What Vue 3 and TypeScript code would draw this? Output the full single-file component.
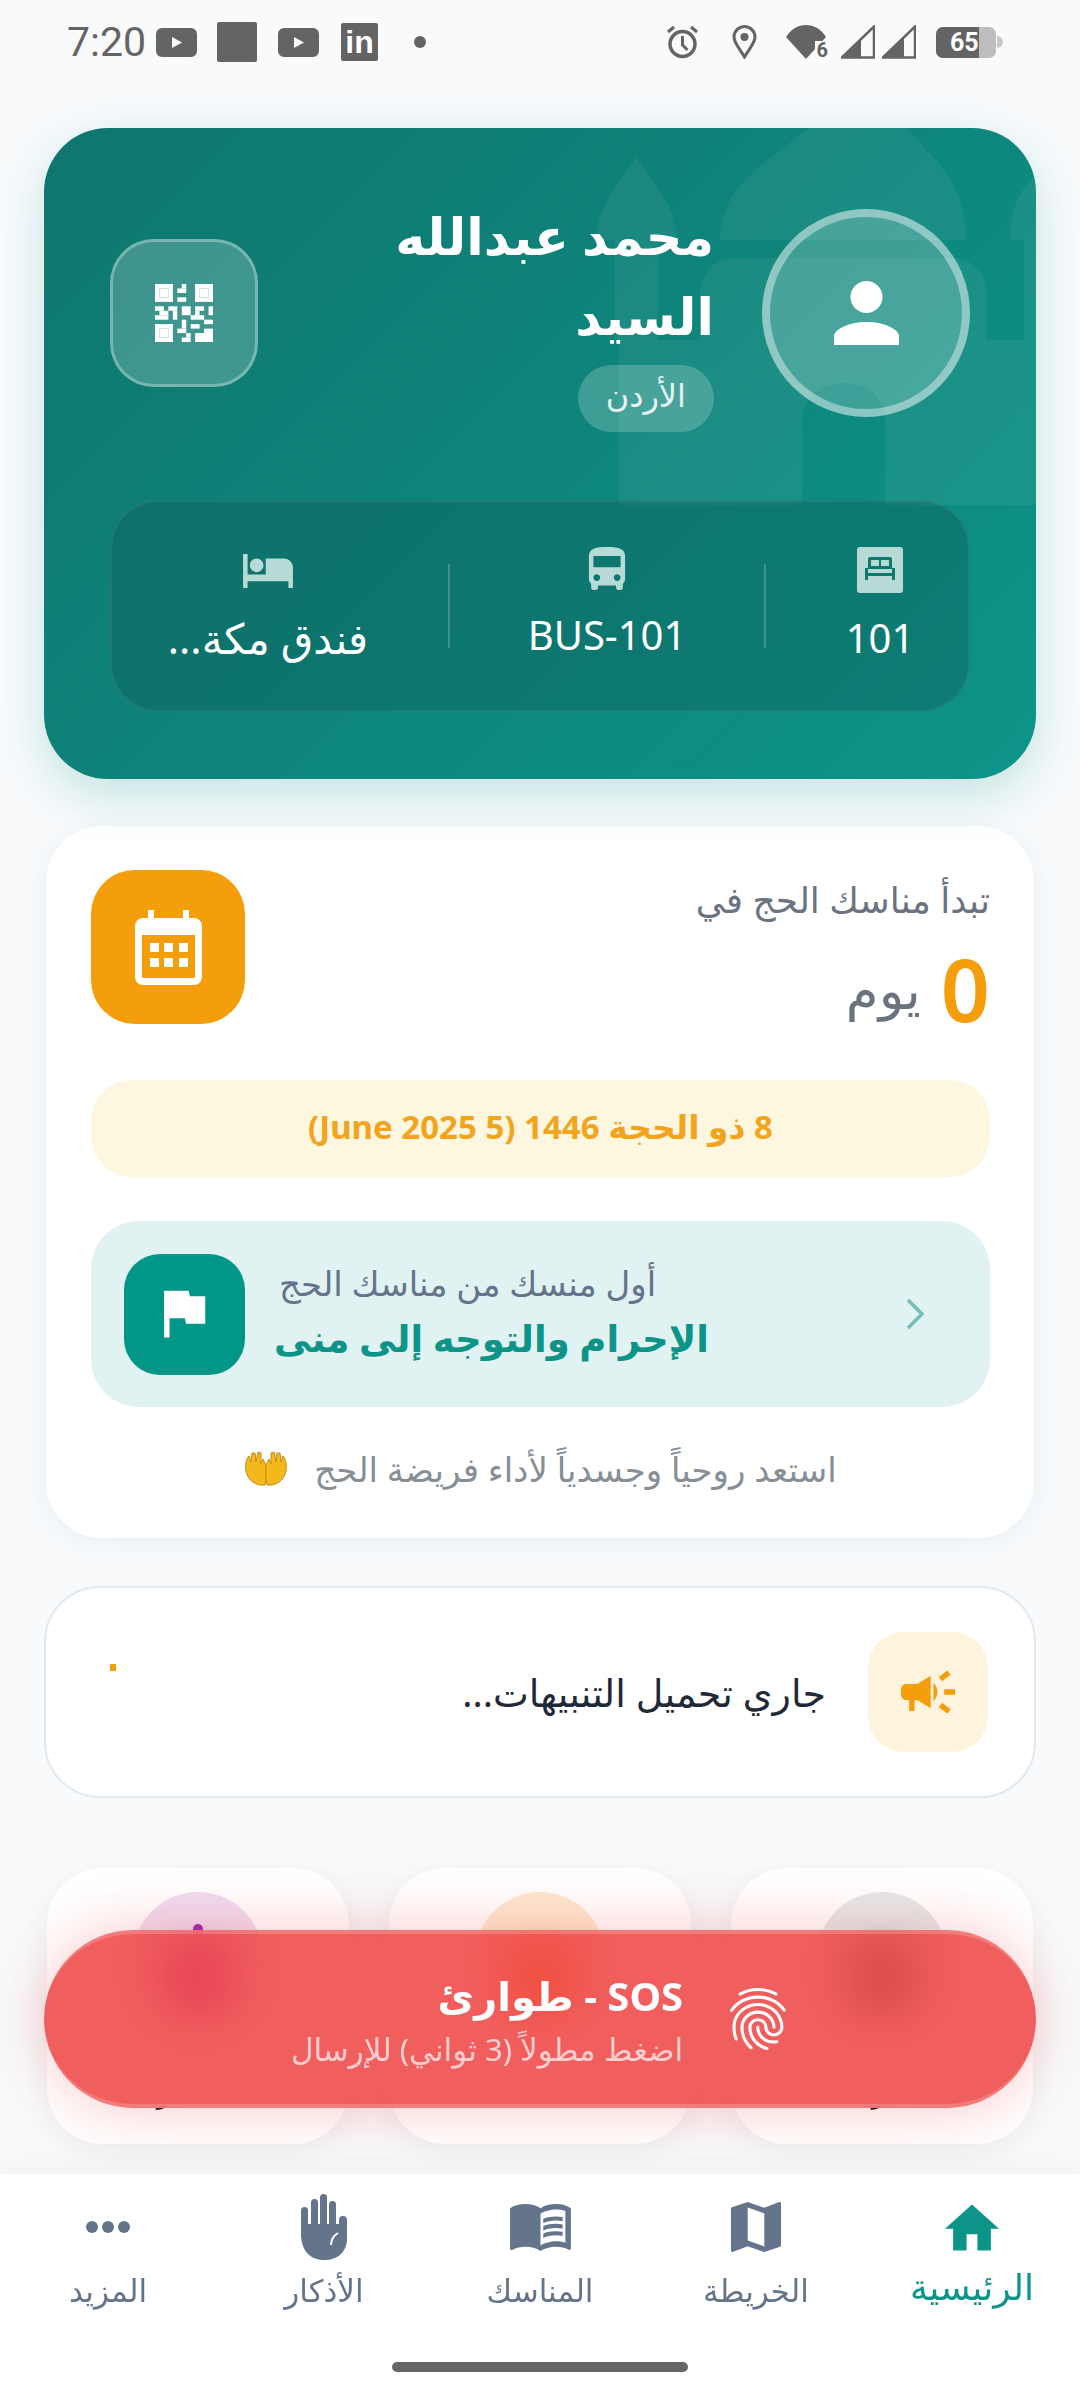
<script setup lang="ts">
interface Stat { label: string; cls: string; path: string; vb: string }
const stats: Stat[] = [
  { label: '101', cls: 'room', vb: '0 0 46 46', path: 'M3 0h40a3 3 0 0 1 3 3v40a3 3 0 0 1-3 3H3a3 3 0 0 1-3-3V3a3 3 0 0 1 3-3zM11 12v9H8v12h3v-4h24v4h3V21h-3v-9a2 2 0 0 0-2-2H13a2 2 0 0 0-2 2zm3 1h8v6h-8zm10 0h8v6h-8zM11 22h24v4H11z' },
  { label: 'BUS-101', cls: 'bus', vb: '4 2 16 19', path: 'M4 16c0 .88.39 1.67 1 2.22V20c0 .55.45 1 1 1h1c.55 0 1-.45 1-1v-1h8v1c0 .55.45 1 1 1h1c.55 0 1-.45 1-1v-1.78c.61-.55 1-1.34 1-2.22V6c0-3.5-3.58-4-8-4s-8 .5-8 4v10zm3.5 1c-.83 0-1.5-.67-1.5-1.5S6.67 14 7.5 14s1.5.67 1.5 1.5S8.33 17 7.5 17zm9 0c-.83 0-1.5-.67-1.5-1.5s.67-1.5 1.5-1.5 1.5.67 1.5 1.5-.67 1.5-1.5 1.5zm1.5-6H6V6h12v5z' },
  { label: 'فندق مكة...', cls: 'hotel', vb: '1 5 22 15', path: 'M7 13c1.66 0 3-1.34 3-3S8.66 7 7 7s-3 1.34-3 3 1.34 3 3 3zm12-6h-8v7H3V5H1v15h2v-3h18v3h2v-9c0-2.21-1.79-4-4-4z' }
]
interface Tile { label: string; circle: string; icon: string; tip: boolean }
const tiles: Tile[] = [
  { label: 'البريد', circle: '#e3e9e8', icon: '#455a64', tip: false },
  { label: 'الخدمة', circle: '#fde8d0', icon: '#f57c00', tip: false },
  { label: 'الأذكار', circle: '#f0dcf0', icon: '#9c27b0', tip: true }
]
const qr: number[][] = [
  [0,0,4,1],[0,0,1,4],[3,0,1,4],[0,3,4,1],[1,1,2,2],
  [9,0,4,1],[9,0,1,4],[12,0,1,4],[9,3,4,1],[10,1,2,2],
  [0,9,4,1],[0,9,1,4],[3,9,1,4],[0,12,4,1],[1,10,2,2],
  [6,0,1,1],[5,1,2,1],[5,3,2,1],[6,5,2,2],[0,5,2,1],[3,5,2,1],[1,6,2,1],[4,6,1,2],[0,7,3,1],
  [9,5,2,1],[12,5,1,2],[8,7,3,1],[11,8,2,1],[6,8,1,2],[5,10,2,1],[8,9,2,1],[6,12,2,1],[7,11,1,1],[9,11,2,2],[11,10,2,3],[9,6,1,1]
]
</script>

<template>
  <div class="page" dir="rtl">
    <div class="status" dir="ltr">
      <span class="time">7:20</span>
      <span class="yt yt-first"><svg viewBox="0 0 41 29" class="fill-grey"><path d="M6 0h29a6 6 0 0 1 6 6v17a6 6 0 0 1-6 6H6a6 6 0 0 1-6-6V6a6 6 0 0 1 6-6zm10 9v11l10-5.500z" fill-rule="evenodd" /></svg></span>
      <span class="sq"></span>
      <span class="yt"><svg viewBox="0 0 41 29" class="fill-grey"><path d="M6 0h29a6 6 0 0 1 6 6v17a6 6 0 0 1-6 6H6a6 6 0 0 1-6-6V6a6 6 0 0 1 6-6zm10 9v11l10-5.500z" fill-rule="evenodd" /></svg></span>
      <span class="li">in</span>
      <span class="dot"></span>
      <span class="grow"></span>
      <svg class="st alarm" viewBox="0 0 33 34" fill="none" stroke="#646464"><circle cx="16.500" cy="19" r="12.500" stroke-width="3.500" /><path d="M16.500 11v9l5 5M2 7l6-5M31 7l-6-5" stroke-width="3" /></svg>
      <svg class="st pin" viewBox="0 0 25 34" fill="none" stroke="#646464" stroke-width="3"><path d="M12.500 32C8 24 2 18 2 12a10.500 10.500 0 0 1 21 0c0 6-6 12-10.500 20z" /><circle cx="12.500" cy="12" r="4" fill="#646464" stroke="none" /></svg>
      <span class="wifi"><svg viewBox="0 0 40 34"><path d="M0 12C5 4 12 0 20 0s15 4 20 12L20 34z" fill="#646464" /></svg><b>6</b></span>
      <svg class="st sig" viewBox="0 0 34 33" fill="none"><path d="M1 32 33 1v31z" stroke="#646464" stroke-width="2.500" /><path d="M1 32 20 14v18z" fill="#646464" /></svg>
      <svg class="st sig sig2" viewBox="0 0 34 33" fill="none"><path d="M1 32 33 1v31z" stroke="#646464" stroke-width="2.500" /><path d="M1 32 22 12v20z" fill="#646464" /></svg>
      <span class="batt"><span class="batt-level"></span><span class="batt-text">65</span></span>
      <span class="batt-tip"></span>
    </div>

    <section class="hero">
      <svg class="mosque" viewBox="0 0 992 651" aria-hidden="true">
        <path d="M676 112C676 50 735 30 770-6h86c32 36 66 56 66 118z" />
        <path d="M552 112c0-32 22-55 40-83 18 28 41 51 41 83zM571 112h43v100h-43z" />
        <path d="M992 47c-18 14-26 38-26 65h26zM980 112h12v100h-12z" />
        <path d="M656 212v-44c0-24 14-38 38-38h210c26 0 39 14 39 38v44z" />
        <path fill-rule="evenodd" d="M575 212h417v165H841v-80c0-28-16-42-41-42s-42 14-42 42v80H575z" />
      </svg>
      <div class="hero-top">
        <div class="avatar">
          <svg viewBox="0 0 65 64" class="avatar-icon"><circle cx="32.500" cy="16" r="16" fill="#fff" /><path d="M0 64V55C0 49 14 41 32.500 41S65 49 65 55v9z" fill="#fff" /></svg>
        </div>
        <div class="who">
          <h1 class="name">محمد عبدالله السيد</h1>
          <span class="badge">الأردن</span>
        </div>
        <span class="grow"></span>
        <button class="qr" type="button">
          <svg viewBox="0 0 13 13" class="qr-icon"><rect v-for="(r, i) in qr" :key="i" :x="r[0]" :y="r[1]" :width="r[2]" :height="r[3]" fill="#fff" /></svg>
        </button>
      </div>
      <div class="stats">
        <template v-for="(s, i) in stats" :key="s.cls">
          <span v-if="i > 0" class="sep"></span>
          <div class="stat" :class="s.cls">
            <svg :viewBox="s.vb" class="stat-icon"><path :d="s.path" fill="#b8dad6" fill-rule="evenodd" /></svg>
            <span class="stat-label">{{ s.label }}</span>
          </div>
        </template>
      </div>
    </section>

    <section class="count-card">
      <div class="count-head">
        <div class="count-text">
          <div class="count-sub">تبدأ مناسك الحج في</div>
          <div class="count-row"><span class="zero">0</span><span class="day">يوم</span></div>
        </div>
        <span class="grow"></span>
        <div class="cal-box">
          <svg viewBox="0 0 67 75" class="cal-icon" fill="#fff"><path fill-rule="evenodd" d="M13 0h6v8h29V0h6v8h5a8 8 0 0 1 8 8v51a8 8 0 0 1-8 8H8a8 8 0 0 1-8-8V16a8 8 0 0 1 8-8h5zM7 25v42a1 1 0 0 0 1 1h51a1 1 0 0 0 1-1V25z" /><rect x="15" y="33" width="9" height="9" /><rect x="29" y="33" width="9" height="9" /><rect x="44" y="33" width="9" height="9" /><rect x="15" y="48" width="9" height="9" /><rect x="29" y="48" width="9" height="9" /><rect x="44" y="48" width="9" height="9" /></svg>
        </div>
      </div>
      <div class="date-pill">8 ذو الحجة 1446 (5 June 2025)</div>
      <div class="rite" dir="ltr">
        <div class="rite-icon">
          <svg viewBox="5 4 16 17" class="flag"><path d="M14.400 6 14 4H5v17h2v-7h5.600l.4 2h7V6z" fill="#fff" /></svg>
        </div>
        <div class="rite-text" dir="rtl">
          <div class="rite-sub">أول منسك من مناسك الحج</div>
          <div class="rite-title">الإحرام والتوجه إلى منى</div>
        </div>
        <span class="grow"></span>
        <svg viewBox="0 0 18 32" class="chev" fill="none" stroke="#6fc0b6" stroke-width="3.500"><path d="m2 2 14 14L2 30" /></svg>
      </div>
      <div class="note">
        <span>استعد روحياً وجسدياً لأداء فريضة الحج</span>
        <svg viewBox="0 0 44 36" class="palms"><path d="M21 34C12 35 4 30 2 20 1 14 2 8 5 5l2 6 1-9 3 0 1 9 2-10 3 1 0 11 2-5 3 6c1 7 0 14-1 20z" fill="#f3b81c" stroke="#c98a10" stroke-width="1" /><path d="M23 34c9 1 17-4 19-14 1-6 0-12-3-15l-2 6-1-9-3 0-1 9-2-10-3 1 0 11-2-5-3 6c-1 7 0 14 1 20z" fill="#f3b81c" stroke="#c98a10" stroke-width="1" /></svg>
      </div>
    </section>

    <section class="alert">
      <div class="alert-icon">
        <svg viewBox="2 4 20 16" class="horn"><path d="M18 11v2h4v-2h-4zm-2 6.610c.96.71 2.210 1.650 3.200 2.390.4-.53.8-1.070 1.200-1.600-.99-.74-2.240-1.680-3.200-2.400-.4.54-.8 1.080-1.200 1.610zM20.400 5.600c-.4-.53-.8-1.070-1.200-1.600-.99.74-2.240 1.680-3.200 2.400.4.53.8 1.070 1.200 1.600.96-.72 2.210-1.650 3.200-2.400zM4 9c-1.100 0-2 .9-2 2v2c0 1.100.9 2 2 2h1v4h2v-4h1l5 3V6L8 9H4zm11.500 3c0-1.330-.58-2.530-1.500-3.350v6.690c.92-.81 1.500-2.010 1.500-3.340z" fill="#f59e0b" /></svg>
      </div>
      <span class="alert-text">جاري تحميل التنبيهات...</span>
      <span class="ticker"></span>
    </section>

    <section class="tiles">
      <div v-for="t in tiles" :key="t.label" class="tile">
        <div class="tile-circle" :style="{ background: t.circle }">
          <span class="tile-glyph" :style="{ background: t.icon }"></span>
          <span v-if="t.tip" class="tile-tip" :style="{ background: t.icon }"></span>
        </div>
        <span class="tile-label">{{ t.label }}</span>
      </div>
    </section>

    <div class="sos" dir="ltr">
      <div class="sos-text" dir="rtl">
        <div class="sos-title">SOS - طوارئ</div>
        <div class="sos-sub">اضغط مطولاً (3 ثواني) للإرسال</div>
      </div>
      <svg viewBox="2 1.500 20 21" class="finger"><path fill="#fff" d="M17.810 4.470c-.08 0-.16-.02-.23-.06C15.660 3.420 14 3 12.010 3c-1.980 0-3.860.47-5.570 1.410-.24.13-.54.04-.68-.2-.13-.24-.04-.55.2-.68C7.820 2.520 9.860 2 12.010 2c2.130 0 3.990.47 6.030 1.520.25.13.34.43.21.67-.09.18-.26.28-.44.28zM3.500 9.720c-.1 0-.2-.03-.29-.09-.23-.16-.28-.47-.12-.7.99-1.400 2.250-2.500 3.750-3.270C9.980 4.040 14 4.030 17.150 5.650c1.500.77 2.760 1.860 3.750 3.250.16.22.11.54-.12.7-.23.16-.54.11-.7-.12-.9-1.260-2.040-2.250-3.390-2.940-2.870-1.470-6.540-1.470-9.400.01-1.360.7-2.500 1.700-3.400 2.960-.08.14-.23.21-.39.21zm6.250 12.070c-.13 0-.26-.05-.35-.15-.87-.87-1.340-1.430-2.010-2.640-.69-1.230-1.050-2.730-1.050-4.340 0-2.970 2.540-5.390 5.660-5.390s5.660 2.420 5.660 5.390c0 .28-.22.5-.5.5s-.5-.22-.5-.5c0-2.420-2.090-4.390-4.660-4.390-2.570 0-4.660 1.970-4.660 4.390 0 1.440.32 2.770.93 3.850.64 1.150 1.080 1.640 1.850 2.420.19.2.19.51 0 .71-.11.1-.24.15-.37.15zm7.170-1.850c-1.190 0-2.240-.3-3.100-.89-1.490-1.010-2.380-2.650-2.380-4.390 0-.28.22-.5.5-.5s.5.22.5.5c0 1.410.72 2.740 1.940 3.560.71.48 1.540.71 2.540.71.24 0 .64-.03 1.040-.1.27-.05.53.13.58.41.05.27-.13.53-.41.58-.57.11-1.070.12-1.210.12zM14.910 22c-.04 0-.09-.01-.13-.02-1.590-.44-2.630-1.030-3.720-2.100-1.400-1.390-2.170-3.240-2.170-5.220 0-1.620 1.380-2.940 3.080-2.940 1.700 0 3.080 1.320 3.080 2.940 0 1.070.93 1.940 2.080 1.940s2.080-.87 2.080-1.940c0-3.770-3.250-6.830-7.250-6.830-2.840 0-5.440 1.580-6.610 4.030-.39.81-.59 1.760-.59 2.800 0 .78.07 2.010.67 3.610.1.260-.03.55-.29.64-.26.1-.55-.04-.64-.29-.49-1.310-.73-2.610-.73-3.960 0-1.200.23-2.290.68-3.240 1.330-2.790 4.280-4.600 7.510-4.600 4.550 0 8.250 3.510 8.250 7.830 0 1.620-1.380 2.940-3.080 2.940s-3.080-1.320-3.080-2.940c0-1.070-.93-1.940-2.080-1.940s-2.080.87-2.080 1.940c0 1.710.66 3.310 1.870 4.510.95.94 1.860 1.460 3.270 1.850.27.07.42.35.35.61-.05.23-.26.38-.47.38z" /></svg>
    </div>

    <nav class="nav">
      <div class="nav-item active">
        <span class="nav-ico"><svg viewBox="2 3 20 17" class="i-home"><path d="M10 20v-6h4v6h5v-8h3L12 3 2 12h3v8z" fill="#0d9488" /></svg></span>
        <span class="nav-label">الرئيسية</span>
      </div>
      <div class="nav-item">
        <span class="nav-ico"><svg viewBox="3 3 18 18" class="i-map"><path d="M20.500 3l-.16.03L15 5.100 9 3 3.360 4.900c-.21.07-.36.25-.36.48V20.500c0 .28.22.5.5.5l.16-.03L9 18.900l6 2.100 5.640-1.900c.21-.07.36-.25.36-.48V3.500c0-.28-.22-.5-.5-.5zM15 19l-6-2.110V5l6 2.110V19z" fill="#64748b" /></svg></span>
        <span class="nav-label">الخريطة</span>
      </div>
      <div class="nav-item">
        <span class="nav-ico"><svg viewBox="1 4.500 22 17" class="i-book"><path fill="#64748b" d="M21 5c-1.110-.35-2.330-.5-3.500-.5-1.950 0-4.050.4-5.500 1.500-1.450-1.100-3.550-1.500-5.500-1.500S2.450 4.900 1 6v14.650c0 .25.25.5.5.5.1 0 .15-.05.25-.05C3.100 20.450 5.050 20 6.500 20c1.950 0 4.050.4 5.500 1.500 1.350-.85 3.800-1.500 5.500-1.500 1.650 0 3.350.3 4.750 1.050.1.05.15.05.25.05.25 0 .5-.25.5-.5V6c-.6-.45-1.250-.75-2-1zm0 13.500c-1.100-.35-2.300-.5-3.500-.5-1.700 0-4.150.65-5.500 1.500V8c1.350-.85 3.800-1.500 5.500-1.500 1.200 0 2.400.15 3.500.5v11.500z" /><path fill="#64748b" d="M17.500 10.500c.88 0 1.730.09 2.500.26V9.240c-.79-.15-1.640-.24-2.500-.24-1.700 0-3.240.29-4.500.83v1.660c1.130-.64 2.700-.99 4.500-.99zM13 12.490v1.660c1.130-.64 2.700-.99 4.500-.99.88 0 1.730.09 2.500.26V11.900c-.79-.15-1.640-.24-2.500-.24-1.700 0-3.240.3-4.500.83zM17.500 14.330c-1.700 0-3.240.29-4.500.83v1.660c1.130-.64 2.700-.99 4.500-.99.88 0 1.730.09 2.500.26v-1.520c-.79-.16-1.640-.24-2.500-.24z" /></svg></span>
        <span class="nav-label">المناسك</span>
      </div>
      <div class="nav-item">
        <span class="nav-ico"><svg viewBox="0 0 46 66" class="i-hand"><g fill="#64748b"><rect x="0" y="13" width="7" height="32" rx="3.500" /><rect x="10" y="5" width="7" height="36" rx="3.500" /><rect x="19" y="0" width="7" height="40" rx="3.500" /><rect x="28" y="7" width="7" height="34" rx="3.500" /><rect x="38" y="22" width="8" height="28" rx="4" /><path d="M0 30h46v14c0 14-9 22-23 22S1 57 0 42z" /></g><path d="M30 51c0-5 2-9 7-12" fill="none" stroke="#fff" stroke-width="2" /></svg></span>
        <span class="nav-label">الأذكار</span>
      </div>
      <div class="nav-item">
        <span class="nav-ico"><svg viewBox="0 0 44 12" class="i-more"><circle cx="6" cy="6" r="6" fill="#64748b" /><circle cx="22" cy="6" r="6" fill="#64748b" /><circle cx="38" cy="6" r="6" fill="#64748b" /></svg></span>
        <span class="nav-label">المزيد</span>
      </div>
      <span class="handle"></span>
    </nav>
  </div>
</template>

<style>
html, body { margin: 0; background: #f8fafc; }
</style>

<style scoped>
* { box-sizing: border-box; }
.page {
  position: relative;
  width: 1080px;
  height: 2400px;
  overflow: hidden;
  padding: 0 44px;
  background: #f8fafc;
  font-family: "Noto Sans", "DejaVu Sans", sans-serif;
}
.grow { flex: 1; }

/* status bar */
.status {
  display: flex;
  align-items: center;
  height: 128px;
  padding: 0 0 44px 23px;
  margin-right: 33px;
  color: #646464;
}
.time { font: 41px Roboto, sans-serif; width: 80px; }
.yt { display: block; width: 41px; height: 29px; margin-left: 21px; line-height: 0; }
.yt-first { margin-left: 9px; }
.fill-grey { width: 41px; height: 29px; fill: #646464; }
.sq { width: 40px; height: 40px; margin-left: 20px; background: #646464; border-radius: 2px; }
.li {
  width: 37px; height: 38px; margin-left: 22px; background: #646464; color: #fff; border-radius: 2px;
  font: bold 32px/38px "Liberation Sans", sans-serif; text-align: center;
}
.dot { width: 12px; height: 12px; margin-left: 36px; background: #646464; border-radius: 50%; }
.st { display: block; height: 34px; }
.alarm { width: 33px; }
.pin { width: 25px; margin-left: 33px; }
.wifi { position: relative; width: 40px; height: 34px; margin-left: 29px; line-height: 0; }
.wifi svg { width: 40px; height: 34px; }
.wifi b { position: absolute; right: -2px; bottom: -1px; padding-left: 2px; background: #fbfcfe; font: bold 20px/19px Roboto, sans-serif; color: #646464; }
.sig { width: 34px; margin-left: 15px; }
.sig2 { margin-left: 7px; }
.batt { position: relative; width: 60px; height: 31px; margin-left: 20px; border-radius: 7px; overflow: hidden; background: #bdbdbd; }
.batt-level { position: absolute; inset: 0 17px 0 0; background: #646464; }
.batt-text { position: absolute; left: 14px; top: 0; font: bold 25px/31px Roboto, sans-serif; color: #fff; }
.batt-tip { width: 6px; height: 12px; margin-left: 1px; background: #c8c8c8; border-radius: 0 6px 6px 0; }

/* hero */
.hero {
  position: relative;
  height: 651px;
  padding: 81px 66px 0;
  border-radius: 64px;
  background: linear-gradient(135deg, #0f766e 0%, #0d9488 100%);
  box-shadow: 0 16px 48px rgba(13, 148, 136, .22);
  overflow: hidden;
}
.mosque { position: absolute; inset: 0; width: 100%; height: 100%; fill: rgba(255, 255, 255, .055); }
.hero-top { position: relative; display: flex; align-items: flex-start; }
.avatar {
  display: flex; align-items: center; justify-content: center;
  flex: none; width: 208px; height: 208px; border-radius: 50%;
  background: rgba(255, 255, 255, .2); border: 8px solid rgba(255, 255, 255, .4);
}
.avatar-icon { width: 65px; height: 64px; }
.who { width: 400px; margin-right: 48px; margin-top: -14px; }
.name { margin: 0; font: bold 51px/80px "Noto Sans", "DejaVu Sans", sans-serif; color: #fff; }
.badge {
  display: inline-block; height: 67px; margin-top: 10px; padding: 0 28px; border-radius: 34px;
  background: rgba(255, 255, 255, .2); color: #e6f4f2; font-size: 32px; line-height: 60px;
}
.qr {
  flex: none; display: flex; align-items: center; justify-content: center;
  width: 148px; height: 148px; margin: 30px 0 0 0; padding: 0; border-radius: 44px;
  background: rgba(255, 255, 255, .2); border: 3px solid rgba(255, 255, 255, .3);
}
.qr-icon { width: 58px; height: 58px; }
.stats {
  position: absolute; left: 66px; right: 66px; top: 372px; height: 212px;
  display: flex; align-items: center;
  border-radius: 48px; background: rgba(15, 90, 85, .36); border: 2px solid rgba(255, 255, 255, .07);
}
.sep { flex: none; width: 2px; height: 84px; background: rgba(255, 255, 255, .2); }
.stat { display: flex; flex-direction: column; align-items: center; height: 124px; margin-top: 6px; }
.room { width: 202px; padding-left: 26px; }
.bus { width: 314px; }
.hotel { flex: 1; padding-right: 24px; }
.stat-icon { display: block; height: 46px; width: 52px; }
.bus .stat-icon { height: 43px; }
.hotel .stat-icon { height: 34px; margin: 7px 0 5px; }
.stat-label { margin-top: 17px; font-size: 40px; line-height: 56px; color: #fff; white-space: nowrap; }
.hotel .stat-label { font-size: 42px; }

/* countdown */
.count-card {
  margin: 47px 2px 0; height: 712px; padding: 44px 44px 0 45px;
  background: #fff; border-radius: 56px; box-shadow: 0 4px 24px rgba(15, 118, 110, .07);
}
.count-head { display: flex; align-items: flex-start; height: 154px; }
.count-sub { font-size: 36px; line-height: 50px; color: #6b7280; margin-top: 5px; }
.count-row { display: flex; align-items: center; gap: 20px; height: 90px; margin-top: 19px; }
.zero { font-size: 86px; font-weight: 600; line-height: 90px; color: #f59e0b; }
.day { font-size: 53px; color: #6b7280; line-height: 90px; }
.cal-box { display: flex; align-items: center; justify-content: center; width: 154px; height: 154px; border-radius: 44px; background: #f59e0b; }
.cal-icon { width: 67px; height: 75px; }
.date-pill {
  height: 97px; margin-top: 56px; border-radius: 40px; background: #fef7e0; text-align: center;
  color: #f2a41c; font-size: 33px; font-weight: 700; line-height: 94px;
}
.rite { display: flex; align-items: center; height: 186px; margin-top: 44px; padding: 0 66px 0 33px; border-radius: 48px; background: #e0f2f1; }
.rite-icon { display: flex; align-items: center; justify-content: center; flex: none; width: 121px; height: 121px; border-radius: 36px; background: #009688; }
.flag { width: 44px; height: 48px; margin-left: 2px; }
.rite-text { margin-left: 34px; width: 430px; text-align: left; }
.rite-sub { font-size: 34px; line-height: 48px; color: #64748b; }
.rite-title { font-size: 37px; font-weight: 700; line-height: 62px; color: #0d9488; white-space: nowrap; }
.chev { width: 18px; height: 32px; }
.note { display: flex; align-items: center; justify-content: center; gap: 26px; height: 70px; margin-top: 27px; color: #868e96; font-size: 34px; }
.palms { width: 44px; height: 36px; }

/* alert */
.alert {
  position: relative; display: flex; align-items: center; gap: 42px; height: 212px; margin-top: 48px; padding: 0 46px 0 0;
  background: #fff; border: 2px solid #e2e8f0; border-radius: 56px;
}
.alert-icon { display: flex; align-items: center; justify-content: center; width: 120px; height: 120px; border-radius: 36px; background: #fef3dc; }
.horn { width: 54px; height: 44px; }
.alert-text { font-size: 38px; color: #1f2937; }
.ticker { position: absolute; left: 64px; top: 76px; width: 6px; height: 7px; background: #f59e0b; }

/* tiles */
.tiles { display: flex; justify-content: space-between; margin: 70px 3px 0; }
.tile {
  display: flex; flex-direction: column; align-items: center;
  width: 302px; height: 276px; padding-top: 24px; border-radius: 56px;
  background: #fff; box-shadow: 0 6px 30px rgba(0, 0, 0, .05);
}
.tile-circle { position: relative; display: flex; align-items: flex-start; justify-content: center; width: 130px; height: 130px; border-radius: 50%; }
.tile-glyph { display: block; width: 60px; height: 64px; margin-top: 56px; border-radius: 24px; filter: blur(14px); }
.tile-tip { position: absolute; left: 60px; top: 32px; width: 10px; height: 10px; border-radius: 5px 5px 0 0; }
.tile-label { margin-top: 43px; font-size: 32px; line-height: 50px; color: #111827; clip-path: inset(41px -10px -10px -10px); }

/* sos */
.sos {
  position: absolute; left: 44px; top: 1930px; width: 992px; height: 178px;
  display: flex; align-items: center; justify-content: center; gap: 44px;
  border-radius: 89px; background: rgba(239, 68, 68, .86);
  border-top: 4px solid rgba(255, 255, 255, .18); border-bottom: 4px solid rgba(255, 255, 255, .18);
  -webkit-backdrop-filter: blur(20px); backdrop-filter: blur(20px);
  box-shadow: 0 0 60px rgba(239, 68, 68, .3);
}
.sos-title { font-size: 40px; font-weight: 700; line-height: 60px; color: #fff; }
.sos-sub { font-size: 31px; line-height: 46px; color: rgba(255, 255, 255, .7); }
.finger { width: 62px; height: 66px; }

/* nav */
.nav {
  position: absolute; left: 0; right: 0; top: 2174px; height: 226px;
  display: flex; flex-direction: row; background: #fff; box-shadow: 0 -8px 30px rgba(0, 0, 0, .04);
}
.nav-item { flex: 1; display: flex; flex-direction: column; align-items: center; }
.nav-ico { display: flex; align-items: center; justify-content: center; height: 86px; margin-top: 10px; }
.nav-label { margin-top: -6px; font-size: 31px; line-height: 52px; color: #64748b; }
.active .nav-label { margin-top: -9px; font-size: 36px; color: #0d9488; }
.i-home { width: 54px; height: 47px; }
.i-map { width: 50px; height: 50px; }
.i-book { width: 61px; height: 47px; }
.i-hand { width: 46px; height: 66px; }
.i-more { width: 44px; height: 12px; }
.handle { position: absolute; left: 392px; top: 188px; width: 296px; height: 10px; border-radius: 5px; background: #666; }
</style>
